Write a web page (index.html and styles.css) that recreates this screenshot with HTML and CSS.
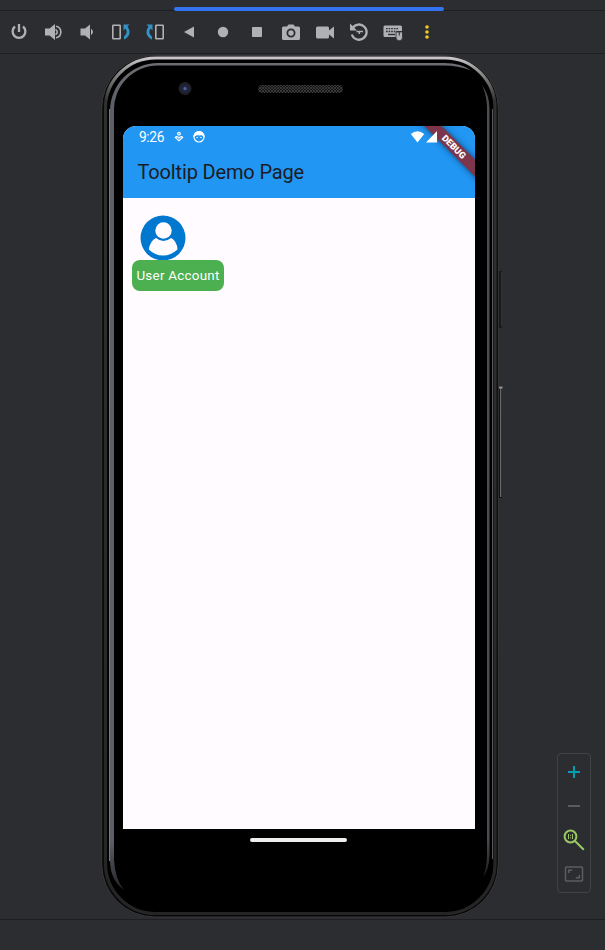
FILE: index.html
```html
<!DOCTYPE html>
<html lang="en">
<head>
<meta charset="utf-8">
<title>Running Devices</title>
<link rel="stylesheet" href="styles.css">
</head>
<body>
<div class="window">
  <header class="tabs"><div class="tab-line"></div></header>
  <nav class="toolbar">
    <svg class="tool" viewBox="0 0 20 20"><path class="line" d="M6 4.500a6.400 6.400 0 1 0 8 0M10 2v8"/></svg>
    <svg class="tool" viewBox="0 0 20 20"><path class="fill" d="M2 6.500H6.500l5.500-4.500v16L6.500 13.500H2z"/><path class="thin" d="M12.500 7.300q3.500 2.700 0 5.400M13 4.200a5.900 5.900 0 0 1 0 11.600"/></svg>
    <svg class="tool" viewBox="0 0 20 20"><path class="fill" d="M3.500 6.500H8L13 2.500v15L8 13.500H3.500zM14 6.800q4 3.200 0 6.400z"/></svg>
    <svg class="tool" viewBox="0 0 20 20"><rect class="thin" x="1.800" y="3.300" width="7.400" height="13.400" rx=".5"/><path class="blue" d="M12.500 2.500h6l-2 2c3.500 5 2.500 10.500-3.500 13v-3c3-2.500 3.300-5 1.500-8l-2 2z"/></svg>
    <svg class="tool" viewBox="0 0 20 20"><rect class="thin" x="10.800" y="3.300" width="7.400" height="13.400" rx=".5"/><path class="blue" d="M7.500 2.500h-6l2 2c-3.500 5-2.500 10.500 3.500 13v-3c-3-2.500-3.300-5-1.500-8l2 2z"/></svg>
    <svg class="tool" viewBox="0 0 20 20"><path class="fill" d="M5 10l10-5.500v11z"/></svg>
    <svg class="tool" viewBox="0 0 20 20"><circle class="fill" cx="10" cy="10" r="5.200"/></svg>
    <svg class="tool" viewBox="0 0 20 20"><rect class="fill" x="5" y="5" width="10" height="10" rx=".7"/></svg>
    <svg class="tool" viewBox="0 0 20 20"><path class="fill" fill-rule="evenodd" d="M2.500 4.500H6l1.500-2h5l1.500 2h3.500q1.500 0 1.500 1.500v10.500q0 1.500-1.500 1.500h-15Q1 18 1 16.500V6q0-1.500 1.500-1.500zM10 6.500a4.500 4.500 0 1 0 0 9 4.500 4.500 0 0 0 0-9z"/><circle class="fill" cx="10" cy="11" r="2.700"/></svg>
    <svg class="tool" viewBox="0 0 20 20"><path class="fill" d="M2.500 4.500h10Q14 4.500 14 6v2.500l5-4v12l-5-4V15q0 1.500-1.500 1.500h-10Q1 16.500 1 15V6q0-1.500 1.500-1.500z"/></svg>
    <svg class="tool" viewBox="0 0 20 20"><path class="line" d="M3.500 6.200A7.600 7.600 0 1 1 2.800 12.500"/><path class="fill" d="M1 1.500l2.500 2.500 4.500 4.500H1z"/><path class="thin" d="M10.300 12V9.500h3.700M7.500 9.500h3"/></svg>
    <svg class="tool" viewBox="0 0 20 20"><path class="fill" d="M2 3.500h15.500Q19 3.500 19 5V9h-5v6H2Q.5 15 .5 13.500V5Q.5 3.500 2 3.500z"/><path class="keys" d="M3 6.700h12M3 9.500h11"/><path class="space" d="M5 12.500h7"/><path class="mouse" d="M13 10h6.500v5.500a3.250 3.300 0 0 1-6.500 0z"/><path class="split" d="M16.250 10v3.500"/></svg>
    <svg class="tool" viewBox="0 0 20 20"><g class="yellow"><circle cx="10" cy="5" r="1.800"/><circle cx="10" cy="10" r="1.800"/><circle cx="10" cy="15" r="1.800"/></g></svg>
  </nav>
  <main class="workspace">
    <section class="phone">
      <svg class="shell" viewBox="0 0 404 865">
        <defs>
          <linearGradient id="rim" x1="0" y1="0" x2="0" y2="1"><stop offset="0" stop-color="#c9c5ca"/><stop offset=".012" stop-color="#999"/><stop offset=".05" stop-color="#303030"/><stop offset="1" stop-color="#252525"/></linearGradient>
          <linearGradient id="glass" x1="0" y1="0" x2="0" y2="1"><stop offset="0" stop-color="#6c6e73"/><stop offset=".05" stop-color="#5c6066"/><stop offset=".94" stop-color="#5c6066"/><stop offset="1" stop-color="#222427"/></linearGradient>
          <linearGradient id="edge" x1="0" y1="0" x2="0" y2="1"><stop offset="0" stop-color="#4b4c51"/><stop offset=".95" stop-color="#4b4c51"/><stop offset="1" stop-color="#1c1d1f"/></linearGradient>
          <pattern id="mesh" width="3" height="3" patternUnits="userSpaceOnUse"><rect width="3" height="3" fill="#121212"/><path d="M0 0l3 3M3 0L0 3" stroke="#484848" stroke-width=".7"/></pattern>
        </defs>
        <path d="M397 216h4v57h-4z" fill="#191a1b"/><path d="M400.500 217v54" stroke="#303234"/>
        <path d="M397 331h4v112h-4z" fill="#111"/><path d="M399.700 332v110" stroke="#66686a" stroke-width="1.400"/><path d="M398 332.500h3.500" stroke="#999" stroke-width="2"/>
        <rect x=".7" y=".5" width="396.600" height="861.500" rx="53" fill="#080808" stroke="#3b3839"/>
        <rect x="4.500" y="3" width="389.500" height="855.500" rx="50" fill="#000" stroke="url(#rim)" stroke-width="3.200"/>
        <path d="M8.500 806V54" fill="none" stroke="#777a7d"/>
        <path d="M391.500 54v750" fill="none" stroke="#57585a"/>
        <path d="M9 805V56A48 48 0 0 1 57 8H343Q361 8 370 15.500Q357 10.500 343 10.500H57A44 44 0 0 0 13 56V805Q14 824 23 835Q9 825 9 805z" fill="url(#glass)"/>
        <path d="M381 30Q388.500 40 388.500 54V800Q388 815 382 822Q386 812 386 800V54Q386 41 381 30z" fill="url(#edge)"/>
        <circle cx="84" cy="33.500" r="6.500" fill="#202127"/><circle cx="84" cy="33.500" r="3.700" fill="#20264a"/><circle cx="84" cy="33.500" r="1.500" fill="#53649c"/>
        <rect x="157" y="30" width="85" height="8" rx="4" fill="url(#mesh)"/>
      </svg>
      <div class="screen">
        <div class="status">
          <span class="clock">9:26</span>
          <svg class="notice" viewBox="0 0 12 12"><circle cx="6" cy="2.700" r="1.300"/><path d="M6 9.800L2.300 6.500Q3.500 4.500 6 7Q8.500 4.500 9.700 6.500z"/></svg>
          <svg class="notice face" viewBox="0 0 12 12"><circle cx="6" cy="6" r="5"/><path class="hair" d="M1 5Q2 .6 6 .6T11 5L8.500 3.500 6.500 4 4 3.500z"/><path d="M3.500 6.500h1.300M7.200 6.500h1.300"/></svg>
          <svg class="signal" viewBox="0 0 28 14"><path d="M.8 4Q7.500-1.500 14.200 4L7.500 12.500zM27 1v11.500H16z"/></svg>
        </div>
        <div class="appbar">Tooltip Demo Page</div>
        <div class="page">
          <svg class="avatar" viewBox="0 0 46 46"><circle cx="23" cy="23" r="22.500" fill="#0078d0"/><ellipse cx="23.500" cy="15.500" rx="8.200" ry="8.300" fill="#fffbff"/><path d="M16 23Q23.500 29 31 23Q37 26 37.500 34.500Q31 40.500 23 40.500T8.800 34.500Q10 26 16 23z" fill="#fffbff"/></svg>
          <div class="tooltip">User Account</div>
        </div>
        <div class="debug">DEBUG</div>
      </div>
      <div class="home"></div>
    </section>
    <aside class="zoom">
      <svg viewBox="0 0 20 20"><path d="M10 4v12M4 10h12" stroke="#059eb0" stroke-width="2"/></svg>
      <svg viewBox="0 0 20 20"><path d="M4 10h12" stroke="#5b5b59" stroke-width="2"/></svg>
      <svg class="lens" viewBox="0 0 22 22"><circle cx="7.500" cy="7.500" r="5.900"/><path d="M12 12l8.800 8.800"/><path class="one" d="M5.500 5v5M9.500 5v5M7.500 5.800v1M7.500 8.300v1"/></svg>
      <svg class="fit" viewBox="0 0 20 20"><rect x="1.500" y="3" width="17" height="14" rx="1"/><path d="M4.700 9V6.200h3.500M15.300 11v2.800h-3.500"/></svg>
    </aside>
  </main>
  <footer class="bottom"></footer>
</div>
</body>
</html>
```

FILE: styles.css
```css
* { box-sizing: border-box; }
body { margin: 0; background: #2b2d30; font-family: Roboto, sans-serif; }
svg { display: block; }
.window { width: 605px; height: 950px; display: flex; flex-direction: column; overflow: hidden; }
.tabs { height: 11px; border-bottom: 1px solid #1e1f22; padding: 7px 0 0 174px; flex: none; }
.tab-line { width: 270px; height: 4px; border-radius: 2px; background: #3574f0; position: relative; }
.toolbar { height: 43px; flex: none; border-bottom: 1px solid #1e1f22; display: flex; align-items: center; gap: 14px; padding-left: 9px; }
.tool { width: 20px; height: 20px; }
.line, .thin { fill: none; stroke: #afb1b3; stroke-width: 2.300; }
.thin { stroke-width: 1.600; }
.fill { fill: #afb1b3; }
.blue { fill: #3592c4; }
.yellow { fill: #f2c92d; }
.keys { fill: none; stroke: #2b2d30; stroke-width: 1.300; stroke-dasharray: 1.600 1; }
.space { stroke: #2b2d30; stroke-width: 1.300; }
.mouse { fill: #afb1b3; stroke: #2b2d30; stroke-width: .8; }
.split { stroke: #2b2d30; }
.workspace { flex: 1; display: flex; align-items: flex-start; position: relative; }
.phone { position: relative; width: 404px; height: 865px; margin-left: 101px; padding: 72px 0 0 22px; }
.shell { position: absolute; left: 0; top: 1px; width: 404px; height: 865px; }
.screen { position: relative; width: 352px; height: 703px; border-radius: 13px 13px 0 0; overflow: hidden; background: #fffbff; }
.status { height: 24px; background: #2196f3; color: #fff; display: flex; align-items: center; padding: 0 37px 2px 16px; }
.clock { font-size: 13.800px; width: 34px; letter-spacing: -.4px; }
.notice { width: 12px; height: 12px; fill: none; stroke: #fff; stroke-width: 1.200; margin-right: 8px; }
.face .hair { fill: #fff; }
.signal { position: relative; z-index: 1; width: 28px; height: 14px; margin-left: auto; fill: #fff; }
.appbar { height: 48px; background: #2196f3; color: #1c1b1f; font-size: 20px; letter-spacing: -.15px; line-height: 45px; padding-left: 14.500px; white-space: nowrap; }
.page { padding: 17px 9px; }
.avatar { width: 46px; height: 46px; margin-left: 8px; }
.tooltip { width: 92px; height: 31px; margin-top: -1px; position: relative; border-radius: 8px; background: #4caf50; color: #fff; font-size: 13.400px; line-height: 31px; text-align: center; white-space: nowrap; letter-spacing: .25px; }
.debug { position: absolute; left: 281px; top: 15px; width: 100px; height: 11.500px; transform: rotate(45deg); background: #7d354b; color: #fff; font-size: 9.200px; line-height: 11.500px; font-weight: 900; text-align: center; box-shadow: 0 0 6px #0008; }
.home { position: relative; width: 97px; height: 4px; border-radius: 2px; background: #eee; margin: 9px 0 0 127px; }
.zoom { position: absolute; left: 557px; top: 699px; width: 34px; height: 140px; border: 1px solid #404244; border-radius: 4px; display: flex; flex-direction: column; align-items: center; gap: 14px; padding-top: 8px; }
.zoom svg { width: 20px; height: 20px; flex: none; }
.zoom .lens { fill: none; stroke: #9bc866; stroke-width: 2; width: 22px; height: 22px; margin: -1px 0; }
.lens .one { stroke-width: 1; }
.fit { fill: none; stroke: #5b5d5e; stroke-width: 1.500; }
.bottom { height: 31px; flex: none; border-top: 1px solid #1e1f22; }
```
